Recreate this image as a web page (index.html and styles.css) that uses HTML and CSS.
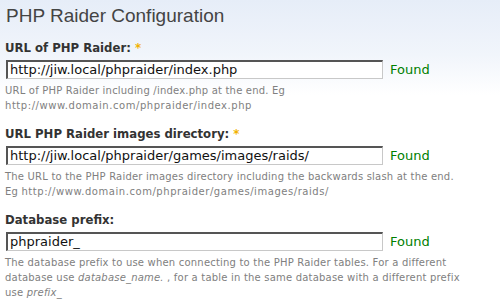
FILE: index.html
```html
<!DOCTYPE html>
<html>
<head>
<meta charset="utf-8">
<link rel="stylesheet" href="styles.css">
</head>
<body>
<div class="page">
  <h1 class="title">PHP Raider Configuration</h1>

  <div class="field">
    <div class="label">URL of PHP Raider: <span class="req">*</span></div>
    <div class="row">
      <div class="textbox">http://jiw.local/phpraider/index.php</div>
      <span class="found">Found</span>
    </div>
    <div class="desc">URL of PHP Raider including /index.php at the end. Eg<br><span class="url">http://www.domain.com/phpraider/index.php</span></div>
  </div>

  <div class="field">
    <div class="label">URL PHP Raider images directory: <span class="req">*</span></div>
    <div class="row">
      <div class="textbox">http://jiw.local/phpraider/games/images/raids/</div>
      <span class="found">Found</span>
    </div>
    <div class="desc">The URL to the PHP Raider images directory including the backwards slash at the end.<br>Eg <span class="url">http://www.domain.com/phpraider/games/images/raids/</span></div>
  </div>

  <div class="field">
    <div class="label">Database prefix:</div>
    <div class="row">
      <div class="textbox">phpraider_</div>
      <span class="found">Found</span>
    </div>
    <div class="desc">The database prefix to use when connecting to the PHP Raider tables. For a different<br>database use <em>database_name.</em> , for a table in the same database with a different prefix<br>use <em>prefix_</em></div>
  </div>
</div>
</body>
</html>
```

FILE: styles.css
```css
html, body {
  margin: 0;
  padding: 0;
}
body {
  width: 500px;
  height: 306px;
  overflow: hidden;
  background: linear-gradient(to bottom, #e6edf8 0px, #f1f5fb 55px, #ffffff 95px);
  font-family: "DejaVu Sans", Verdana, sans-serif;
}
.page {
  padding: 0 0 0 5px;
}
.title {
  margin: 0;
  padding: 4px 0 0 1px;
  height: 40px;
  box-sizing: border-box;
  font-family: "Liberation Sans", Arial, sans-serif;
  font-weight: normal;
  font-size: 19px;
  line-height: 24px;
  color: #444;
}
.field {
  margin-bottom: 13px;
}
.label {
  font-family: "DejaVu Sans Condensed", "DejaVu Sans", sans-serif;
  font-size: 13px;
  line-height: 16px;
  font-weight: bold;
  color: #333;
}
.req {
  color: #f2b200;
  font-weight: bold;
}
.row {
  display: flex;
  align-items: center;
  margin-top: 4px;
}
.textbox {
  box-sizing: border-box;
  width: 377px;
  height: 19px;
  margin-left: 1px;
  padding: 0 0 0 2px;
  border-top: 2px solid #555;
  border-left: 2px solid #555;
  border-right: 1px solid #c8c8c8;
  border-bottom: 1px solid #c8c8c8;
  background: #fff;
  font-size: 13px;
  line-height: 16px;
  color: #111;
  white-space: nowrap;
  overflow: hidden;
}
.found {
  margin-left: 7px;
  font-size: 13px;
  color: #008000;
}
.desc {
  margin-top: 4px;
  font-size: 10px;
  line-height: 15px;
  letter-spacing: 0.2px;
  color: #808080;
  white-space: nowrap;
}
.desc .url {
  letter-spacing: 0.55px;
}
.desc em {
  font-style: italic;
}
```
